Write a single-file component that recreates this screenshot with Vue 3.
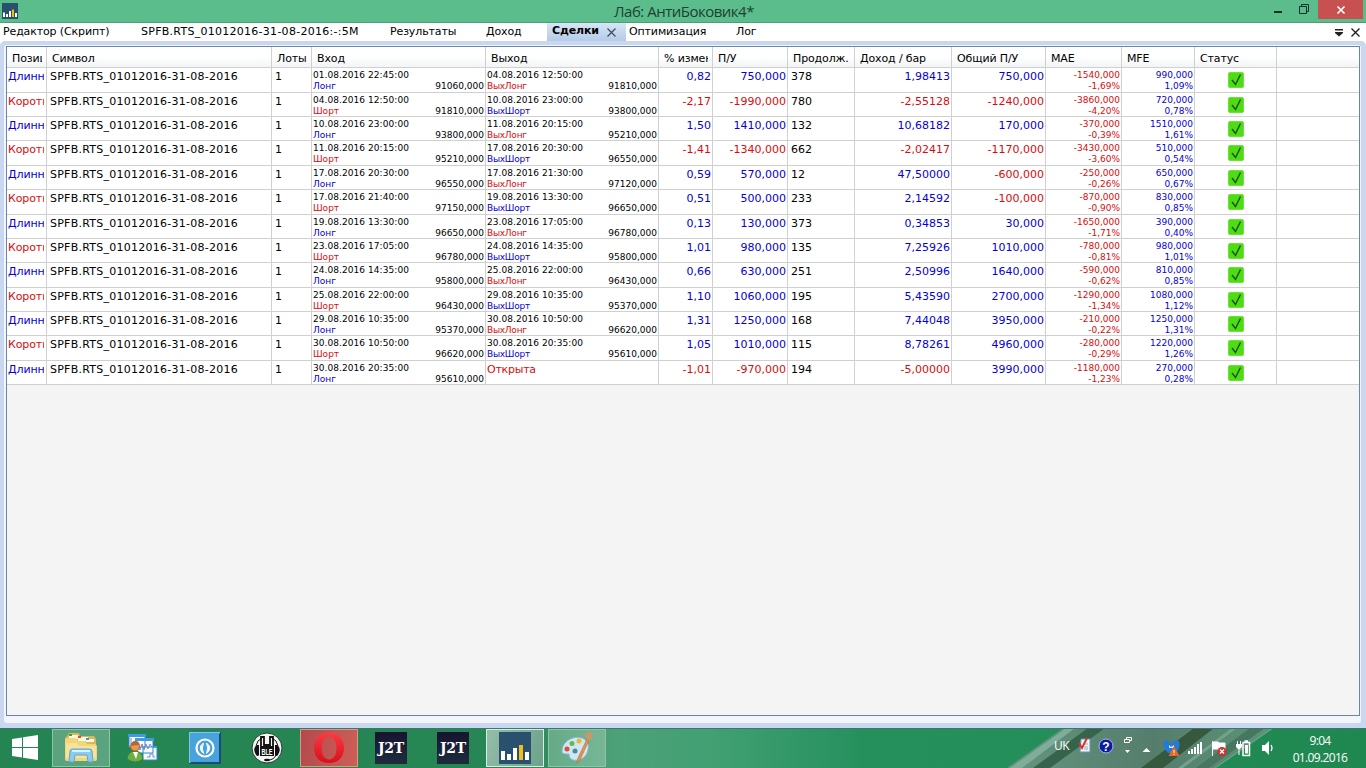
<template>
  <div class="screen">
    <header class="titlebar">
      <svg class="app-icon" width="16" height="16" viewBox="0 0 32 32">
        <rect width="32" height="32" fill="#29506f" />
        <path d="M2 19h4v9H2zM8 22h4v6H8zM14 16h4v12h-4zM26 20h4v8h-4z" fill="#fff" />
        <path d="M20 13h4v15h-4z" fill="#f0bd19" />
      </svg>
      <span class="title">Лаб: АнтиБоковик4*</span>
      <div class="win-buttons">
        <svg width="88" height="20" viewBox="0 0 88 20">
          <path d="M6 11h8v2H6z" fill="#16302a" />
          <path d="M31.5 6.5h7v7h-7zM33.5 6v-1.500h7v7h-1.500" fill="none" stroke="#16302a" />
        </svg>
        <div class="close">
          <svg width="10" height="10" viewBox="0 0 10 10">
            <path d="M1.5 1.5l7 7M8.5 1.5l-7 7" stroke="#fff" stroke-width="1.700" />
          </svg>
        </div>
      </div>
    </header>

    <nav class="tabs">
      <div v-for="tab in tabs" :key="tab.name" class="tab" :class="{ active: tab.active, latin: tab.latin }" :style="{ width: tab.width + 'px' }">
        <span>{{ tab.name }}</span>
        <svg v-if="tab.active" width="9" height="9" viewBox="0 0 9 9">
          <path d="M.5.5l8 8M8.5.5l-8 8" stroke="#444b55" stroke-width="1.200" />
        </svg>
      </div>
      <svg class="tab-tools" width="28" height="12" viewBox="0 0 28 12">
        <path d="M1 2h8v1.500H1zM1 5h8v1L5 9.500 1 6z" fill="#222" />
        <path d="M17.5 1.5l8 8M25.5 1.5l-8 8" stroke="#222" stroke-width="1.400" />
      </svg>
    </nav>

    <main class="frame">
      <div class="frame-inner">
        <div class="table">
          <div class="row head">
            <div v-for="(h, i) in headers" :key="i" class="cell"><span>{{ h }}</span></div>
          </div>
          <div v-for="(t, i) in trades" :key="i" class="row">
            <div class="cell pos" :class="t.long ? 'blue' : 'red'"><div>{{ t.long ? 'Длинная' : 'Короткая' }}</div></div>
            <div class="cell sym">SPFB.RTS_01012016-31-08-2016</div>
            <div class="cell lots">1</div>
            <div class="cell deal">
              <div class="date">{{ t.inDate }}</div>
              <div class="sub">
                <span :class="t.long ? 'blue' : 'red'">{{ t.long ? 'Лонг' : 'Шорт' }}</span>
                <span>{{ t.inPrice }},000</span>
              </div>
            </div>
            <div v-if="t.outDate" class="cell deal">
              <div class="date">{{ t.outDate }}</div>
              <div class="sub">
                <span class="side" :class="t.long ? 'red' : 'blue'">{{ t.long ? 'ВыхЛонг' : 'ВыхШорт' }}</span>
                <span>{{ t.outPrice }},000</span>
              </div>
            </div>
            <div v-else class="cell open red">Открыта</div>
            <div class="cell num" :class="tone(t.change)">{{ t.change }}</div>
            <div class="cell num" :class="tone(t.profit)">{{ t.profit }}</div>
            <div class="cell bars">{{ t.bars }}</div>
            <div class="cell num" :class="tone(t.perBar)">{{ t.perBar }}</div>
            <div class="cell num" :class="tone(t.total)">{{ t.total }}</div>
            <div class="cell pair red"><div>{{ t.mae }}</div><div>{{ t.maePct }}</div></div>
            <div class="cell pair blue"><div>{{ t.mfe }}</div><div>{{ t.mfePct }}</div></div>
            <div class="cell status">
              <svg width="16" height="16" viewBox="0 0 16 16">
                <rect x=".5" y=".5" width="15" height="15" rx="1.500" fill="#50dc12" stroke="#66e536" />
                <path d="M4 8l3.500 4.500 5-10" fill="none" stroke="#17540b" stroke-width="1.400" />
              </svg>
            </div>
            <div class="cell"></div>
          </div>
        </div>
      </div>
    </main>

    <footer class="taskbar">
      <svg class="wallpaper" width="1366" height="40" viewBox="0 0 1366 40" preserveAspectRatio="none">
        <defs>
          <linearGradient id="bar">
            <stop offset="0" stop-color="#248553" />
            <stop offset=".38" stop-color="#268654" />
            <stop offset=".45" stop-color="#4da178" />
            <stop offset=".52" stop-color="#42a073" />
            <stop offset=".63" stop-color="#26905d" />
            <stop offset=".74" stop-color="#248f5a" />
            <stop offset="1" stop-color="#1f8750" />
          </linearGradient>
          <linearGradient id="leaf">
            <stop offset="0" stop-color="#669580" />
            <stop offset=".55" stop-color="#557d6b" />
            <stop offset="1" stop-color="#5c947b" />
          </linearGradient>
        </defs>
        <rect width="1366" height="40" fill="url(#bar)" />
        <path d="M1007 40L1063 0H1273L1215 40z" fill="url(#leaf)" />
        <path d="M1010 40L1066 0h9L1022 40z" fill="#7eae9a" />
        <path d="M1033 40L1088 0h17L1050 40z" fill="#35634b" />
        <path d="M1141 40L1194 0h20L1163 40z" fill="#35583f" />
        <path d="M1178 40L1232 0h5L1183 40z" fill="#74a38d" />
        <path d="M1196 40L1250 0h15L1209 40z" fill="#47775f" />
        <path d="M1215 40L1273 0" stroke="#6daf8d" />
        <path d="M0 .5h1366" stroke="#3b776d" />
      </svg>

      <div class="task start">
        <svg width="28" height="28" viewBox="0 0 28 28" fill="#fff">
          <path d="M1 5l10-1.500V13H1zM12 3.300L27 1v12H12zM1 14h10v9.500L1 22zM12 14h15v12l-15-2.200z" />
        </svg>
      </div>
      <div class="task boxed explorer">
        <svg width="34" height="32" viewBox="0 0 34 32">
          <path d="M3 4l2-3h10l1 3h14l2 3v20H1V6z" fill="#d8b85e" />
          <path d="M5 3h9v4H5zM14 5h10v4H14zM22 7h8v3h-8z" fill="#fff8dd" />
          <path d="M5 2h3v2H5z" fill="#38a43c" />
          <path d="M14 4h3v2h-3z" fill="#d94b35" />
          <path d="M22 6h3v2h-3z" fill="#3c93d1" />
          <path d="M1 9q0-3 3-3h8l2 3h7l2 3h7q3 0 3 3v12q0 2-2 2H3q-2 0-2-2z" fill="#f2d67c" />
          <path d="M2 11h11l2 3h17v12H2z" fill="#f8e398" />
          <path d="M5 30l1-11q0-2 3-2h16q3 0 3 2l1 11h-5l-1-7H11l-1 7z" fill="#8bcbed" stroke="#5ca5ce" />
          <path d="M8 19h18" stroke="#d5f4ff" stroke-width="2" />
        </svg>
      </div>
      <div class="task">
        <svg width="32" height="32" viewBox="0 0 32 32">
          <path d="M2 3h16v12H2zM16 15h14v13H16zM9 7h17v14H9z" fill="#f7fbff" stroke="#2f87cf" />
          <path d="M1 2h18v3H1zM8 6h19v3H8zM26 14h4v2h-4z" fill="#3d9ce4" />
          <path d="M11 15l2 3 2-6 2 6 2-6 2 5 2-5 2 3M4 6v6M20 25h3v-3h3v3h2" fill="none" stroke="#7d89c5" />
          <path d="M0 27q1-8 8-8 7 0 8 8-7 6-16 0z" fill="#6caf43" stroke="#41812c" />
          <path d="M6 20l3 7 2-7z" fill="#fff" />
          <circle cx="8" cy="14.5" r="4.500" fill="#e59a52" stroke="#ad5b2a" />
          <path d="M4 14q0-5 4.500-5 4 0 4 4-5 0-8.500 1z" fill="#b9662a" />
        </svg>
      </div>
      <div class="task">
        <svg width="32" height="32" viewBox="0 0 32 32">
          <path d="M0 0h32v32H0z" fill="#174c7b" />
          <path d="M0 0h31v1L1 31H0z" fill="#7dc6ef" />
          <path d="M1 1h29v29H1z" fill="#48a3dc" />
          <circle cx="16" cy="16" r="8.500" fill="none" stroke="#fff" stroke-width="2.200" />
          <path d="M14.5 11q-6.500 5 0 10.500-2.500-5.500 0-10.500zM17.5 11q6.500 5 0 10.500 2.500-5.500 0-10.500z" fill="#fff" stroke="#fff" />
        </svg>
      </div>
      <div class="task">
        <svg width="32" height="32" viewBox="0 0 32 32">
          <circle cx="16" cy="16" r="15" fill="#f5f5f3" stroke="#263c31" />
          <path d="M6 13q-5 3-1 10 2 2 3 0V13zM26 13q5 3 1 10-2 2-3 0V13z" fill="#111" />
          <path d="M5 14q1-6 6-8M27 14q-1-6-6-8" fill="none" stroke="#111" />
          <path d="M10 15V5h3v8h6V5h3v10" fill="none" stroke="#111" stroke-width="1.800" />
          <path d="M9 14h14v10H9z" fill="#151515" />
          <text x="16" y="22.5" text-anchor="middle" textLength="11" lengthAdjust="spacingAndGlyphs" font-family="Liberation Sans" font-size="9" font-weight="700" fill="#fff">BLE</text>
          <path d="M25 23q-2 5-8 5" fill="none" stroke="#111" />
          <ellipse cx="16" cy="28" rx="3" ry="1.300" fill="#111" />
        </svg>
      </div>
      <div class="task boxed opera">
        <svg width="32" height="32" viewBox="0 0 32 32">
          <defs>
            <linearGradient id="opera" x2="0" y2="1">
              <stop offset="0" stop-color="#ff3942" />
              <stop offset="1" stop-color="#d6101c" />
            </linearGradient>
          </defs>
          <path d="M16 1C7 1 1 7 1 16s6 15 15 15 15-6 15-15S25 1 16 1zm0 3.500c5 0 7.500 5 7.500 11.500S21 27.500 16 27.500 8.500 22.500 8.500 16 11 4.500 16 4.500z" fill="url(#opera)" fill-rule="evenodd" />
        </svg>
      </div>
      <div v-for="n in 2" :key="n" class="task"><div class="j2t"><span>J2T</span></div></div>
      <div class="task boxed current">
        <svg width="32" height="32" viewBox="0 0 32 32">
          <rect width="32" height="32" fill="#29506f" />
          <path d="M2 19h4v9H2zM8 22h4v6H8zM14 16h4v12h-4zM26 20h4v8h-4z" fill="#fff" />
          <path d="M20 13h4v15h-4z" fill="#f0bd19" />
        </svg>
      </div>
      <div class="task boxed paint">
        <svg width="34" height="34" viewBox="0 0 34 34">
          <path d="M2 20C2 10 14 4 22 7c6 2 8 8 5 15-3 8-14 9-17 5-2-3 1-4-3-4-3 0-5 0-5-3z" fill="#cfe7f5" stroke="#85b5d5" />
          <circle cx="7" cy="18" r="2.500" fill="#e04b3d" />
          <circle cx="12" cy="12.5" r="2.500" fill="#66b847" />
          <circle cx="19" cy="10" r="2.500" fill="#f1b72c" />
          <circle cx="15" cy="20" r="2.500" fill="#478d91" />
          <path d="M27 8l2 1-9 20-3 3 1-5z" fill="#e6954b" stroke="#ba6730" stroke-width=".6" />
          <path d="M24 3l5-2 4 1-1 5-3 3-3-3z" fill="#c49a68" />
        </svg>
      </div>

      <div class="tray">
        <span class="lang">UK</span>
        <svg class="tray-icons" width="210" height="24" viewBox="0 0 210 24">
          <!-- checklist -->
          <path d="M3 3h9v13H2z" fill="#eef4fb" stroke="#6c93b7" />
          <path d="M6 8h4M6 11h4M6 13h4" stroke="#92acc7" />
          <path d="M1 7l3 5 5-10" fill="none" stroke="#df3026" stroke-width="2" />
          <!-- help -->
          <circle cx="28" cy="10" r="7" fill="#0c1ca2" stroke="#a7b9da" />
          <text x="28" y="14.5" text-anchor="middle" font-family="Liberation Sans" font-size="12" font-weight="700" fill="#fff">?</text>
          <!-- language bar controls -->
          <path d="M46.5 3.5h5v3h-5zM48.5 3v-1.500h5v3h-2" fill="none" stroke="#fff" />
          <path d="M47 14h5l-2.500 3zM64.500 16l4-4 4 4z" fill="#fff" />
          <path d="M86 5q5-2 7 4 3-6 8-4 2 6-3 12h-8q-6-5-4-12z" fill="#2479d9" />
          <path d="M91 9l2 2 3-2v3h-5z" fill="#d9edff" />
          <path d="M96 10l5.500 10H90.500z" fill="#e76824" />
          <path d="M96 14v3M96 18v1" stroke="#fff" />
          <!-- signal -->
          <path d="M110 15h2v3h-2zM113 13h2v5h-2zM116 11h2v7h-2zM119 8h2v10h-2zM122 6h2v12h-2z" fill="#fff" />
          <!-- action centre -->
          <path d="M134.500 5v15M135 6h5l1 1h6v7h-6l-1-1h-5z" fill="#fff" stroke="#fff" />
          <circle cx="144" cy="15.5" r="4.500" fill="#d62e2a" />
          <path d="M142 13.500l4 4M146 13.500l-4 4" stroke="#fff" stroke-width="1.400" />
          <!-- battery -->
          <path d="M165 6.500h6.500v13H165zM166.500 5h3.500" fill="none" stroke="#fff" stroke-width="1.500" />
          <path d="M167 9h3v8.500h-3z" fill="#fff" />
          <path d="M158 8h6v3l-2 2h-2l-2-2zM159 5h1v3h-1zM162 5h1v3h-1zM160.500 13h1v6h-1z" fill="#fff" />
          <!-- sound -->
          <path d="M184 9h3l4-4v14l-4-4h-3z" fill="#fff" />
          <path d="M193 9q2 3 0 6" fill="none" stroke="#fff" stroke-width="1.200" />
        </svg>
        <div class="clock">
          <div>9:04</div>
          <div>01.09.2016</div>
        </div>
      </div>
    </footer>
  </div>
</template>

<script setup>
const tabs = [
  { name: 'Редактор (Скрипт)', width: 138 },
  { name: 'SPFB.RTS_01012016-31-08-2016:-:5M', width: 249, latin: true },
  { name: 'Результаты', width: 96 },
  { name: 'Доход', width: 64 },
  { name: 'Сделки', width: 79, active: true },
  { name: 'Оптимизация', width: 107 },
  { name: 'Лог', width: 60 }
]

const headers = ['Позиция', 'Символ', 'Лоты', 'Вход', 'Выход', '% изменения', 'П/У', 'Продолж.', 'Доход / бар', 'Общий П/У', 'MAE', 'MFE', 'Статус', '']

// вход, цена, выход, цена, %, П/У, баров, доход/бар, общий, MAE, MAE%, MFE, MFE%
const raw = [
  ['01.08.2016 22:45:00', 91060, '04.08.2016 12:50:00', 91810, '0,82', '750,000', 378, '1,98413', '750,000', '-1540,000', '-1,69%', '990,000', '1,09%'],
  ['04.08.2016 12:50:00', 91810, '10.08.2016 23:00:00', 93800, '-2,17', '-1990,000', 780, '-2,55128', '-1240,000', '-3860,000', '-4,20%', '720,000', '0,78%'],
  ['10.08.2016 23:00:00', 93800, '11.08.2016 20:15:00', 95210, '1,50', '1410,000', 132, '10,68182', '170,000', '-370,000', '-0,39%', '1510,000', '1,61%'],
  ['11.08.2016 20:15:00', 95210, '17.08.2016 20:30:00', 96550, '-1,41', '-1340,000', 662, '-2,02417', '-1170,000', '-3430,000', '-3,60%', '510,000', '0,54%'],
  ['17.08.2016 20:30:00', 96550, '17.08.2016 21:30:00', 97120, '0,59', '570,000', 12, '47,50000', '-600,000', '-250,000', '-0,26%', '650,000', '0,67%'],
  ['17.08.2016 21:40:00', 97150, '19.08.2016 13:30:00', 96650, '0,51', '500,000', 233, '2,14592', '-100,000', '-870,000', '-0,90%', '830,000', '0,85%'],
  ['19.08.2016 13:30:00', 96650, '23.08.2016 17:05:00', 96780, '0,13', '130,000', 373, '0,34853', '30,000', '-1650,000', '-1,71%', '390,000', '0,40%'],
  ['23.08.2016 17:05:00', 96780, '24.08.2016 14:35:00', 95800, '1,01', '980,000', 135, '7,25926', '1010,000', '-780,000', '-0,81%', '980,000', '1,01%'],
  ['24.08.2016 14:35:00', 95800, '25.08.2016 22:00:00', 96430, '0,66', '630,000', 251, '2,50996', '1640,000', '-590,000', '-0,62%', '810,000', '0,85%'],
  ['25.08.2016 22:00:00', 96430, '29.08.2016 10:35:00', 95370, '1,10', '1060,000', 195, '5,43590', '2700,000', '-1290,000', '-1,34%', '1080,000', '1,12%'],
  ['29.08.2016 10:35:00', 95370, '30.08.2016 10:50:00', 96620, '1,31', '1250,000', 168, '7,44048', '3950,000', '-210,000', '-0,22%', '1250,000', '1,31%'],
  ['30.08.2016 10:50:00', 96620, '30.08.2016 20:35:00', 95610, '1,05', '1010,000', 115, '8,78261', '4960,000', '-280,000', '-0,29%', '1220,000', '1,26%'],
  ['30.08.2016 20:35:00', 95610, '', 0, '-1,01', '-970,000', 194, '-5,00000', '3990,000', '-1180,000', '-1,23%', '270,000', '0,28%']
]

const trades = raw.map(([inDate, inPrice, outDate, outPrice, change, profit, bars, perBar, total, mae, maePct, mfe, mfePct], i) => ({
  long: i % 2 === 0,
  inDate, inPrice, outDate, outPrice, change, profit, bars, perBar, total, mae, maePct, mfe, mfePct
}))

function tone(value) {
  return value.startsWith('-') ? 'red' : 'blue'
}
</script>

<style>
body {
  margin: 0;
  overflow: hidden;
}
</style>

<style scoped>
.screen {
  width: 1366px;
  height: 768px;
  display: flex;
  flex-direction: column;
  overflow: hidden;
  background: #fff;
  font-family: "DejaVu Sans", sans-serif;
  font-size: 11px;
  color: #000;
}
.titlebar {
  height: 23px;
  flex: none;
  display: flex;
  align-items: flex-start;
  justify-content: space-between;
  box-sizing: border-box;
  background: #5bbd8b;
  border-bottom: 1px solid #4b9f77;
}
.app-icon {
  margin: 3px 0 0 2px;
}
.title {
  margin-left: 82px;
  font: 15px/23px "Open Sans", sans-serif;
  letter-spacing: -.5px;
  color: #1e4033;
}
.win-buttons {
  display: flex;
  width: 98px;
  flex: none;
}
.win-buttons > svg {
  flex: none;
  width: 88px;
  margin-right: -38px;
}
.close {
  width: 45px;
  height: 19px;
  flex: none;
  display: flex;
  align-items: center;
  justify-content: center;
  background: #c75050;
}
.tabs {
  height: 18px;
  flex: none;
  display: flex;
  line-height: 17px;
}
.tab {
  box-sizing: border-box;
  flex: none;
  padding-left: 3px;
  white-space: nowrap;
  letter-spacing: -.13px;
}
.tab.latin {
  letter-spacing: .27px;
}
.tab.active {
  display: flex;
  align-items: center;
  justify-content: space-between;
  padding: 0 10px 0 5px;
  font-weight: bold;
  background: linear-gradient(#d8e6f6, #b4cbe8);
}
.tab.active span {
  line-height: 16px;
  padding-bottom: 2px;
}
.tab-tools {
  margin: 4px 4px 0 auto;
}
.frame {
  height: 687px;
  flex: none;
  box-sizing: border-box;
  padding: 4px 5px 5px 4px;
  background: #c9d8f0;
  border-radius: 5px 5px 0 0;
}
.frame-inner {
  height: 100%;
  box-sizing: border-box;
  padding: 1px 1px 7px 2px;
  background: #f4f5f8;
  border-radius: 3px;
}
.table {
  height: 100%;
  box-sizing: border-box;
  border: 1px solid #6688a8;
  background: #f4f4f4;
}
.row {
  display: grid;
  grid-template-columns: 40px 225px 40px 174px 173px 54px 75px 67px 97px 94px 76px 73px 82px 1fr;
  height: 24.350px;
  background: #fff;
}
.cell {
  box-sizing: border-box;
  min-width: 0;
  overflow: hidden;
  white-space: nowrap;
  border-right: 1px solid #d0d0d0;
  border-bottom: 1px solid #d0d0d0;
  line-height: 17px;
}
.cell:last-child {
  border-right: none;
}
.head {
  height: 21.450px;
  background: linear-gradient(#fff 45%, #f1f3f5);
}
.head .cell {
  padding: 0 4px 0 5px;
  line-height: 23px;
  letter-spacing: -.13px;
}
.head .cell span {
  display: block;
  overflow: hidden;
}
.pos {
  padding: 0 2px 0 1px;
  letter-spacing: -.1px;
}
.pos div {
  overflow: hidden;
}
.sym,
.lots,
.bars {
  padding-left: 3px;
}
.sym {
  letter-spacing: .25px;
}
.num {
  padding-right: 1px;
  text-align: right;
}
.deal,
.pair {
  padding: 2px 1px 0;
  font-size: 9px;
  line-height: 11px;
}
.date {
  letter-spacing: .06px;
}
.side {
  letter-spacing: -.25px;
}
.sub {
  display: flex;
  justify-content: space-between;
}
.pair {
  text-align: right;
}
.open {
  padding-left: 1px;
  letter-spacing: -.25px;
}
.status {
  display: flex;
  justify-content: center;
  padding-top: 4px;
}
.blue {
  color: #0600d4;
}
.red {
  color: #d80c0c;
}
.taskbar {
  height: 40px;
  flex: none;
  display: flex;
  position: relative;
}
.wallpaper {
  position: absolute;
  inset: 0;
}
.task {
  position: relative;
  width: 58px;
  height: 38px;
  margin: 1px 2px;
  flex: none;
  box-sizing: border-box;
  display: flex;
  align-items: center;
  justify-content: center;
}
.start {
  width: 46px;
}
.boxed {
  border: 1px solid #8fc4a8;
  background: rgba(255, 255, 255, .25);
}
.opera {
  border-color: #d79a86;
  background: linear-gradient(100deg, #b34a4b, #cd5f58);
}
.current {
  border-color: #d8ece1;
  background: linear-gradient(110deg, #94bda9, #6da28a);
}
.j2t {
  width: 32px;
  height: 32px;
  display: flex;
  align-items: center;
  justify-content: center;
  background: linear-gradient(#171431, #1d2d3d);
  color: #fff;
  font: bold 14px "DejaVu Serif", serif;
  letter-spacing: -.3px;
}
.tray {
  position: relative;
  display: flex;
  align-items: flex-start;
  margin-left: auto;
  color: #fff;
  font-family: "Open Sans", sans-serif;
  font-size: 12px;
}
.lang {
  width: 24px;
  line-height: 36px;
  letter-spacing: -.6px;
}
.tray-icons {
  margin-top: 8px;
}
.clock {
  width: 64px;
  margin-right: 14px;
  padding-top: 4px;
  line-height: 17px;
  letter-spacing: -.65px;
  text-align: center;
}
</style>
